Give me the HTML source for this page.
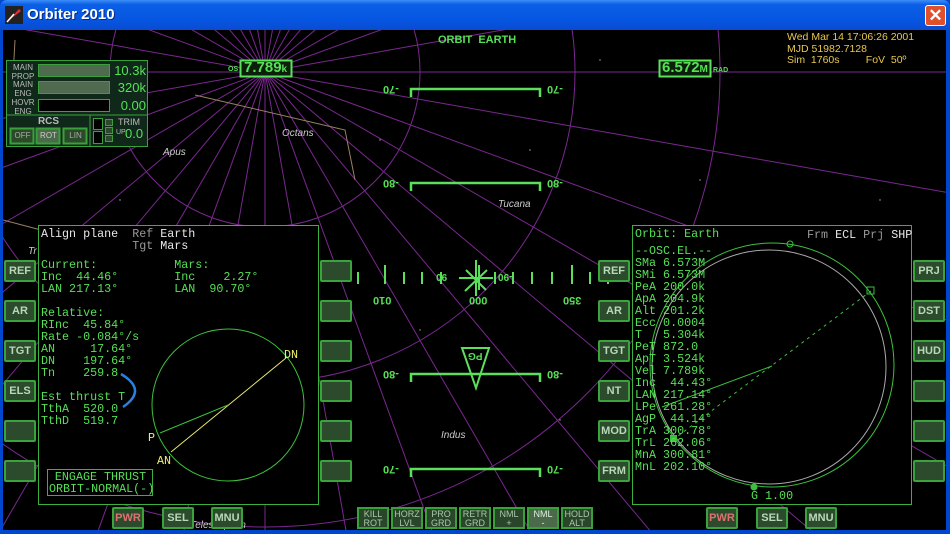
<!DOCTYPE html>
<html><head><meta charset="utf-8"><style>
*{margin:0;padding:0;box-sizing:border-box}
html,body{width:950px;height:534px;overflow:hidden}
body{background:#0047d0;font-family:"Liberation Sans",sans-serif;position:relative}
.tb{position:absolute;left:0;top:0;width:950px;height:30px;background:linear-gradient(#3d8ef8 0,#0b5fe6 15%,#0655e0 70%,#0a4cd0 100%);border-radius:7px 7px 0 0}
.tt{position:absolute;left:27px;top:6px;color:#fff;font-weight:bold;font-size:15px;text-shadow:1px 1px #0a2a80}
.cl{position:absolute;left:925px;top:5px;width:21px;height:21px;background:#e0502a;border:1px solid #fff;border-radius:3px;color:#fff;font-size:17px;font-weight:bold;text-align:center;line-height:19px}
.scr{position:absolute;left:3px;top:30px;width:943px;height:500px;background:#000;overflow:hidden}
.a{position:absolute}
.m{font-family:"Liberation Mono",monospace;font-size:11.7px;color:#55e055;line-height:12px;white-space:pre}
.w{color:#e8e8e8}.g{color:#999}.y{color:#f0f070}
.btn{position:absolute;width:32px;height:22px;background:#2c4a2c;border:2px solid #3ba33b;border-radius:2px;color:#b8d8b8;font-size:11px;font-weight:bold;text-align:center;line-height:18px}
.ap{position:absolute;width:32px;height:22px;background:#2a462a;border:2px solid #3aa03a;color:#a8c8a8;font-size:9px;text-align:center;line-height:9px;padding-top:1px}
.hl{font-family:"Liberation Sans",sans-serif;font-weight:bold;font-size:11px;color:#55e055}
.rot{transform:rotate(180deg)}
.cn{font-family:"Liberation Sans",sans-serif;font-style:italic;font-size:10px;color:#ccc}
</style></head><body>
<div class="tb"></div>
<svg class="a" style="left:5px;top:6px" width="18" height="18"><rect width="18" height="18" fill="#222"/><path d="M2 16 L14 3 L16 5 Z" fill="#e03030"/><path d="M2 16 L9 8" stroke="#fff" stroke-width="1.5"/></svg>
<div class="tt">Orbiter 2010</div>
<div class="cl">✕</div>
<div class="scr"></div>
<svg class="a" style="left:3px;top:30px" width="943" height="500" viewBox="3 30 943 500">
<g stroke="#7a2890" stroke-width="1" fill="none">
<circle cx="265" cy="72" r="155"/><circle cx="265" cy="72" r="310"/><circle cx="265" cy="72" r="455"/>
<line x1="265" y1="72" x2="1265" y2="72"/><line x1="265" y1="72" x2="1250" y2="246"/><line x1="265" y1="72" x2="1205" y2="414"/><line x1="265" y1="72" x2="1130" y2="572"/><line x1="265" y1="72" x2="1031" y2="715"/><line x1="265" y1="72" x2="908" y2="838"/><line x1="265" y1="72" x2="765" y2="938"/><line x1="265" y1="72" x2="607" y2="1012"/><line x1="265" y1="72" x2="439" y2="1057"/><line x1="265" y1="72" x2="265" y2="1072"/><line x1="265" y1="72" x2="91" y2="1057"/><line x1="265" y1="72" x2="-77" y2="1012"/><line x1="265" y1="72" x2="-235" y2="938"/><line x1="265" y1="72" x2="-378" y2="838"/><line x1="265" y1="72" x2="-501" y2="715"/><line x1="265" y1="72" x2="-600" y2="572"/><line x1="265" y1="72" x2="-675" y2="414"/><line x1="265" y1="72" x2="-720" y2="246"/><line x1="265" y1="72" x2="-735" y2="72"/><line x1="265" y1="72" x2="-720" y2="-102"/><line x1="265" y1="72" x2="-675" y2="-270"/><line x1="265" y1="72" x2="-600" y2="-428"/><line x1="265" y1="72" x2="-501" y2="-571"/><line x1="265" y1="72" x2="-378" y2="-694"/><line x1="265" y1="72" x2="-235" y2="-794"/><line x1="265" y1="72" x2="-77" y2="-868"/><line x1="265" y1="72" x2="91" y2="-913"/><line x1="265" y1="72" x2="265" y2="-928"/><line x1="265" y1="72" x2="439" y2="-913"/><line x1="265" y1="72" x2="607" y2="-868"/><line x1="265" y1="72" x2="765" y2="-794"/><line x1="265" y1="72" x2="908" y2="-694"/><line x1="265" y1="72" x2="1031" y2="-571"/><line x1="265" y1="72" x2="1130" y2="-428"/><line x1="265" y1="72" x2="1205" y2="-270"/><line x1="265" y1="72" x2="1250" y2="-102"/>
</g>
<g stroke="#9a8060" stroke-width="1" fill="none"><path d="M195 95 L345 130 L355 180"/><path d="M3 220 L60 235 L98 250"/><path d="M12 95 L15 40"/></g>
<g fill="#aaa"><circle cx="120" cy="200" r=".7"/><circle cx="530" cy="150" r=".7"/><circle cx="700" cy="180" r=".7"/><circle cx="420" cy="330" r=".7"/><circle cx="560" cy="420" r=".7"/><circle cx="880" cy="200" r=".7"/><circle cx="600" cy="60" r=".7"/><circle cx="380" cy="140" r=".7"/></g>
<g stroke="#5ce05c" stroke-width="2.5" fill="none">
<path d="M411 97 V89 H540 V97"/><path d="M411 191 V183 H540 V191"/><path d="M411 382 V374 H540 V382"/><path d="M411 477 V469 H540 V477"/>
<path d="M462 348 H489 L476 388 Z" stroke-width="2"/>
</g>
<g stroke="#5ce05c" stroke-width="2">
<line x1="358" y1="272" x2="358" y2="284"/><line x1="385" y1="265" x2="385" y2="284"/><line x1="404" y1="272" x2="404" y2="284"/><line x1="422" y1="272" x2="422" y2="284"/><line x1="441" y1="272" x2="441" y2="284"/><line x1="459" y1="278" x2="493" y2="278"/><line x1="476" y1="260" x2="476" y2="296"/><line x1="479" y1="265" x2="479" y2="290"/><line x1="465" y1="291" x2="487" y2="270"/><line x1="466" y1="270" x2="486" y2="290"/><line x1="495" y1="272" x2="495" y2="284"/><line x1="513" y1="272" x2="513" y2="284"/><line x1="532" y1="272" x2="532" y2="284"/><line x1="552" y1="272" x2="552" y2="284"/><line x1="572" y1="265" x2="572" y2="284"/><line x1="590" y1="272" x2="590" y2="284"/><line x1="608" y1="272" x2="608" y2="284"/>
</g>
<rect x="38.5" y="225.5" width="280" height="279" fill="#000" stroke="#3cb03c"/>
<circle cx="228" cy="405" r="76" stroke="#3cc03c" fill="none"/>
<line x1="171" y1="452" x2="286" y2="358" stroke="#e8e870"/>
<line x1="160" y1="433" x2="228" y2="405" stroke="#3cc03c"/>
<path d="M121 374 Q148 390 123 407" stroke="#2a80e0" stroke-width="2.5" fill="none"/>
<rect x="47.5" y="469.5" width="105" height="26" fill="none" stroke="#3cb03c"/>
<rect x="632.5" y="225.5" width="279" height="279" fill="#000" stroke="#3cb03c"/>
<circle cx="772" cy="365" r="122" stroke="#3cc03c" fill="none"/>
<circle cx="769" cy="367" r="117" stroke="#aaa" fill="none"/>
<line x1="772" y1="366" x2="662" y2="407" stroke="#3cc03c"/>
<line x1="871" y1="291" x2="674" y2="439" stroke="#3cc03c" stroke-dasharray="3 4"/>
<rect x="867" y="287" width="7" height="7" fill="none" stroke="#3cc03c"/>
<rect x="670" y="435" width="7" height="7" fill="#3cc03c"/>
<circle cx="790" cy="244" r="3" fill="none" stroke="#3cc03c"/>
<circle cx="754" cy="487" r="3.5" fill="#3cc03c"/>
<rect x="6.5" y="60.5" width="141" height="86" fill="#10281a" stroke="#3aa03a"/>
<line x1="7" y1="115" x2="147" y2="115" stroke="#3aa03a"/><line x1="90" y1="115" x2="90" y2="146" stroke="#3aa03a"/>
<rect x="38.5" y="64.5" width="71" height="12" fill="#506a50" stroke="#3aa03a"/>
<rect x="38.5" y="81.5" width="71" height="12" fill="#506a50" stroke="#3aa03a"/>
<rect x="38.5" y="99.5" width="71" height="12" fill="#000" stroke="#3aa03a"/>
<rect x="93.5" y="118.5" width="9" height="11" fill="#000" stroke="#3aa03a"/><rect x="93.5" y="131.5" width="9" height="12" fill="#000" stroke="#3aa03a"/>
<rect x="105.5" y="119.5" width="7" height="6" fill="#2a4a2a" stroke="#3aa03a"/><rect x="105.5" y="127.5" width="7" height="6" fill="#2a4a2a" stroke="#3aa03a"/><rect x="105.5" y="135.5" width="7" height="6" fill="#2a4a2a" stroke="#3aa03a"/>
<rect x="10.5" y="128.5" width="23" height="15" fill="#2a4a2a" stroke="#3aa03a" stroke-width="2"/>
<rect x="36.5" y="128.5" width="23" height="15" fill="#4a6a4a" stroke="#3aa03a" stroke-width="2"/>
<rect x="63.5" y="128.5" width="23" height="15" fill="#2a4a2a" stroke="#3aa03a" stroke-width="2"/>
<rect x="240.5" y="60.5" width="51" height="16" fill="#0a200a" stroke="#5ce05c" stroke-width="2"/>
<rect x="659.5" y="60.5" width="51" height="16" fill="#0a200a" stroke="#5ce05c" stroke-width="2"/>
</svg>
<div class="a" style="left:8px;top:63px;width:30px;font-size:8px;line-height:9px;color:#bbb;text-align:center">MAIN<br>PROP</div>
<div class="a" style="left:8px;top:80px;width:30px;font-size:8px;line-height:9px;color:#bbb;text-align:center">MAIN<br>ENG</div>
<div class="a" style="left:8px;top:98px;width:30px;font-size:8px;line-height:9px;color:#bbb;text-align:center">HOVR<br>ENG</div>
<div class="a hl" style="left:105px;top:63px;width:41px;text-align:right;font-size:13px;font-weight:normal">10.3k</div>
<div class="a hl" style="left:105px;top:80px;width:41px;text-align:right;font-size:13px;font-weight:normal">320k</div>
<div class="a hl" style="left:105px;top:98px;width:41px;text-align:right;font-size:13px;font-weight:normal">0.00</div>
<div class="a" style="left:7px;top:116px;width:83px;text-align:center;font-size:10px;color:#bbb;font-weight:bold">RCS</div>
<div class="a" style="left:11px;top:131px;width:23px;text-align:center;font-size:8px;color:#aaa">OFF</div>
<div class="a" style="left:37px;top:131px;width:23px;text-align:center;font-size:8px;color:#ccc">ROT</div>
<div class="a" style="left:64px;top:131px;width:23px;text-align:center;font-size:8px;color:#aaa">LIN</div>
<div class="a" style="left:118px;top:117px;font-size:9px;color:#bbb">TRIM</div>
<div class="a" style="left:116px;top:129px;font-size:7px;color:#bbb">UP</div>
<div class="a hl" style="left:125px;top:126px;font-size:13px;font-weight:normal">0.0</div>
<div class="a hl" style="left:438px;top:34px;font-size:11px">ORBIT&nbsp; EARTH</div>
<div class="a hl" style="left:228px;top:66px;font-size:7px">OS</div>
<div class="a hl" style="left:244px;top:59px;font-size:15px">7.789<span style="font-size:10px">k</span></div>
<div class="a hl" style="left:662px;top:59px;font-size:15px">6.572<span style="font-size:10px">M</span></div>
<div class="a hl" style="left:713px;top:67px;font-size:7px">RAD</div>
<div class="a" style="left:787px;top:32px;font-size:10.5px;line-height:11.5px;color:#e8c850;white-space:pre">Wed Mar 14 17:06:26 2001
MJD 51982.7128
Sim  1760s         FoV  50º</div>
<div class="a hl rot" style="left:383px;top:83px">-70</div><div class="a hl rot" style="left:547px;top:83px">-70</div>
<div class="a hl rot" style="left:383px;top:177px">-80</div><div class="a hl rot" style="left:547px;top:177px">-80</div>
<div class="a hl rot" style="left:383px;top:368px">-80</div><div class="a hl rot" style="left:547px;top:368px">-80</div>
<div class="a hl rot" style="left:383px;top:463px">-70</div><div class="a hl rot" style="left:547px;top:463px">-70</div>
<div class="a hl rot" style="left:373px;top:294px">010</div><div class="a hl rot" style="left:469px;top:294px">000</div><div class="a hl rot" style="left:563px;top:294px">350</div>
<div class="a hl rot" style="left:436px;top:271px;font-size:10px">90</div><div class="a hl rot" style="left:498px;top:271px;font-size:10px">-90</div>
<div class="a hl rot" style="left:468px;top:350px;font-size:10px">PG</div>
<div class="a cn" style="left:282px;top:128px">Octans</div>
<div class="a cn" style="left:163px;top:147px">Apus</div>
<div class="a cn" style="left:498px;top:199px">Tucana</div>
<div class="a cn" style="left:441px;top:430px">Indus</div>
<div class="a cn" style="left:28px;top:246px">Tr</div>
<div class="a cn" style="left:190px;top:520px">Telescopium</div>
<div class="a m" style="left:41px;top:228px"><span class="w">Align plane</span>  <span class="g">Ref </span><span class="w">Earth</span>
             <span class="g">Tgt </span><span class="w">Mars</span></div>
<div class="a m" style="left:41px;top:259px">Current:           Mars:
Inc  44.46°        Inc    2.27°
LAN 217.13°        LAN  90.70°

Relative:
RInc  45.84°
Rate -0.084°/s
AN     17.64°
DN    197.64°
Tn    259.8

Est thrust T
TthA  520.0
TthD  519.7</div>
<div class="a m y" style="left:284px;top:349px">DN</div>
<div class="a m y" style="left:148px;top:432px">P</div>
<div class="a m y" style="left:157px;top:455px">AN</div>
<div class="a m" style="left:49px;top:471px;width:103px;text-align:center">ENGAGE THRUST
ORBIT-NORMAL(-)</div>
<div class="a m" style="left:635px;top:228px">Orbit: Earth</div>
<div class="a m" style="left:807px;top:229px"><span class="g">Frm </span><span class="w">ECL</span> <span class="g">Prj </span><span class="w">SHP</span></div>
<div class="a m" style="left:635px;top:245px">--OSC.EL.--
SMa 6.573M
SMi 6.573M
PeA 200.0k
ApA 204.9k
Alt 201.2k
Ecc 0.0004
T   5.304k
PeT 872.0
ApT 3.524k
Vel 7.789k
Inc  44.43°
LAN 217.14°
LPe 261.28°
AgP  44.14°
TrA 300.78°
TrL 262.06°
MnA 300.81°
MnL 202.10°</div>
<div class="a m" style="left:751px;top:490px">G 1.00</div>
<div class="btn" style="left:4px;top:260px">REF</div><div class="btn" style="left:4px;top:300px">AR</div><div class="btn" style="left:4px;top:340px">TGT</div><div class="btn" style="left:4px;top:380px">ELS</div><div class="btn" style="left:4px;top:420px"></div><div class="btn" style="left:4px;top:460px"></div>
<div class="btn" style="left:320px;top:260px"></div><div class="btn" style="left:320px;top:300px"></div><div class="btn" style="left:320px;top:340px"></div><div class="btn" style="left:320px;top:380px"></div><div class="btn" style="left:320px;top:420px"></div><div class="btn" style="left:320px;top:460px"></div>
<div class="btn" style="left:598px;top:260px">REF</div><div class="btn" style="left:598px;top:300px">AR</div><div class="btn" style="left:598px;top:340px">TGT</div><div class="btn" style="left:598px;top:380px">NT</div><div class="btn" style="left:598px;top:420px">MOD</div><div class="btn" style="left:598px;top:460px">FRM</div>
<div class="btn" style="left:913px;top:260px">PRJ</div><div class="btn" style="left:913px;top:300px">DST</div><div class="btn" style="left:913px;top:340px">HUD</div><div class="btn" style="left:913px;top:380px"></div><div class="btn" style="left:913px;top:420px"></div><div class="btn" style="left:913px;top:460px"></div>
<div class="btn" style="left:112px;top:507px;color:#e07070">PWR</div><div class="btn" style="left:162px;top:507px">SEL</div><div class="btn" style="left:211px;top:507px">MNU</div>
<div class="btn" style="left:706px;top:507px;color:#e07070">PWR</div><div class="btn" style="left:756px;top:507px">SEL</div><div class="btn" style="left:805px;top:507px">MNU</div>
<div class="ap" style="left:357px;top:507px">KILL<br>ROT</div><div class="ap" style="left:391px;top:507px">HORZ<br>LVL</div><div class="ap" style="left:425px;top:507px">PRO<br>GRD</div><div class="ap" style="left:459px;top:507px">RETR<br>GRD</div><div class="ap" style="left:493px;top:507px">NML<br>+</div><div class="ap" style="left:527px;top:507px;background:#4a6a4a;color:#e0f0e0">NML<br>-</div><div class="ap" style="left:561px;top:507px">HOLD<br>ALT</div>
</body></html>
